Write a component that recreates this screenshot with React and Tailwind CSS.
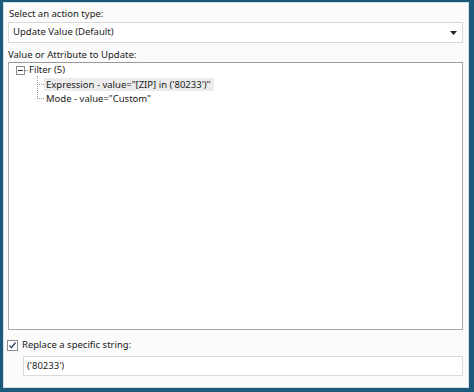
export default function App() {
  return (
    <div className="w-[474px] h-[392px] bg-[#1c5a7b] pl-[3px] pt-[2px] pr-[5px] pb-[4px]" style={{ fontFamily: '"Noto Sans", sans-serif' }}>
      <div className="w-full h-full border border-[#cfe0ea] bg-[#fbfbfb] flex flex-col pl-[4px] pr-[5px] text-[9.5px] text-[#1a1a1a]">
        <div className="mt-[4px] h-[13px] leading-[13px] pl-[1px]">Select an action type:</div>
        <div className="mt-[2px] h-[21px] border border-[#d9d9d9] bg-white flex items-center justify-between pl-[4px] pr-[5px]">
          <span>Update Value (Default)</span>
          <svg width="7" height="4" viewBox="0 0 7 4"><path d="M0 0h7L3.5 4z" fill="#222" /></svg>
        </div>
        <div className="mt-[5px] h-[13px] leading-[13px]">Value or Attribute to Update:</div>
        <div className="mt-[1px] h-[268px] border border-[#a8a8a8] border-t-[#9a9a9a] bg-white relative">
          <div className="absolute left-[7px] top-[1px] flex items-center h-[13px]">
            <div className="w-[9px] h-[9px] border border-[#8c8c8c] bg-white flex items-center justify-center">
              <div className="w-[5px] h-[1px] bg-[#333]" />
            </div>
            <div className="w-[3px] h-[1px] border-t border-dotted border-[#888]" />
            <span className="ml-[1px]">Filter (5)</span>
          </div>
          <div className="absolute left-[28px] top-[13px] w-[1px] h-[23px] border-l border-dotted border-[#999]" />
          <div className="absolute left-[28px] top-[21px] w-[7px] h-[1px] border-t border-dotted border-[#999]" />
          <div className="absolute left-[28px] top-[35px] w-[7px] h-[1px] border-t border-dotted border-[#999]" />
          <div className="absolute left-[35px] top-[15px] h-[13px] leading-[13px] bg-[#ececec] pl-[2px] pr-[3px]">Expression - value="[ZIP] in ('80233')"</div>
          <div className="absolute left-[35px] top-[29px] h-[13px] leading-[13px] pl-[2px]">Mode - value="Custom"</div>
        </div>
        <div className="mt-[9px] -ml-[1px] flex items-center h-[12px]">
          <div className="w-[11px] h-[11px] border border-[#8c8c8c] bg-white flex items-center justify-center">
            <svg width="9" height="9" viewBox="0 0 9 9"><path d="M1.5 4.5l2 2.2L7.5 1.5" fill="none" stroke="#2b4a6b" strokeWidth="1.3" /></svg>
          </div>
          <span className="ml-[4px]">Replace a specific string:</span>
        </div>
        <div className="mt-[5px] ml-[15px] h-[20px] border border-[#d9d9d9] bg-white flex items-center pl-[3px]">('80233')</div>
      </div>
    </div>
  );
}
